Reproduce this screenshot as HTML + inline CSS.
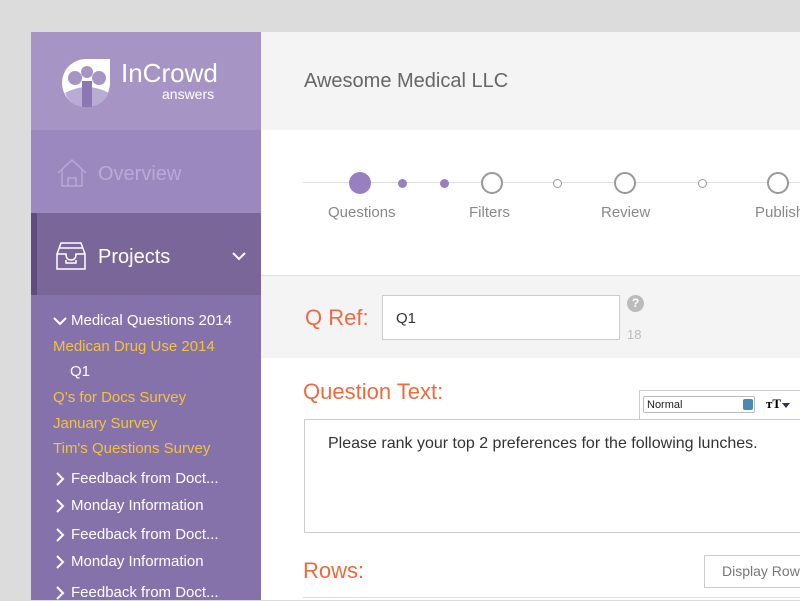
<!DOCTYPE html><html><head><style>
body{margin:0;width:800px;height:600px;background:#dcdcdc;position:relative;overflow:hidden;font-family:"Liberation Sans",sans-serif}
.a{position:absolute}
.sb{left:31px;width:230px}
.t{color:#fff;font-size:15px;white-space:nowrap}
.y{color:#f4c23c;font-size:15px;white-space:nowrap}
.o{color:#f06a40}
.c{position:absolute;border-radius:50%;box-sizing:border-box}
.ch{position:absolute;left:56px}
</style></head><body>
<div class="a sb" style="top:32px;height:98px;background:#a594c4"></div>
<div class="a sb" style="top:130px;height:83px;background:#9a88bf"></div>
<div class="a sb" style="top:213px;height:82px;background:#7a6699"></div>
<div class="a" style="left:31px;top:213px;width:6px;height:82px;background:#5f4d80"></div>
<div class="a sb" style="top:295px;height:305px;background:#8672aa"></div>
<svg class="a" style="left:62px;top:59px" width="50" height="48" viewBox="0 0 50 48"><path d="M0 24 A24 24 0 0 1 24 0 H48 V24 A24 24 0 0 1 24 48 A24 24 0 0 1 0 24Z" fill="#fff"/><path d="M3 34 Q25 22 47 34 Q40 48 24 48 Q9 48 3 34Z" fill="#b9acd4"/><circle cx="13" cy="19" r="7" fill="#a594c4"/><circle cx="25" cy="13" r="6" fill="#a594c4"/><circle cx="37" cy="19" r="7" fill="#a594c4"/><rect x="20" y="22" width="10" height="26" fill="#8b77b3"/></svg>
<div class="a t" style="left:121px;top:58px;font-size:26px">InCrowd</div>
<div class="a t" style="left:162px;top:86px;font-size:14px">answers</div>
<svg class="a" style="left:56px;top:158px" width="32" height="30" viewBox="0 0 32 30" fill="none" stroke="#b6a9d4" stroke-width="1.5"><path d="M2 15 L16 2 L30 15 M6 12 V28 H26 V12 M12 28 V20 H20 V28"/></svg>
<div class="a t" style="left:98px;top:163px;font-size:20px;color:#b8acd6">Overview</div>
<svg class="a" style="left:56px;top:242px" width="30" height="28" viewBox="0 0 30 28" fill="none" stroke="#fff" stroke-width="1.5"><path d="M5 1 H25 L29 12 V27 H1 V12Z M1 12 H10 Q10 18 15 18 Q20 18 20 12 H29 M4 6 H26 M10 18 V21 H20 V18"/></svg>
<div class="a t" style="left:98px;top:246px;font-size:20px">Projects</div>
<svg class="a" style="left:232px;top:252px" width="14" height="9"><path d="M1 1 L7 7 L13 1" stroke="#fff" stroke-width="2" fill="none"/></svg>
<svg class="a" style="left:53px;top:317px" width="14" height="9"><path d="M1 1 L7 7 L13 1" stroke="#fff" stroke-width="2" fill="none"/></svg>
<div class="a t" style="left:71px;top:312px">Medical Questions 2014</div>
<div class="a y" style="left:53px;top:338px">Medican Drug Use 2014</div>
<div class="a t" style="left:70px;top:363px">Q1</div>
<div class="a y" style="left:53px;top:389px">Q’s for Docs Survey</div>
<div class="a y" style="left:53px;top:415px">January Survey</div>
<div class="a y" style="left:53px;top:440px">Tim's Questions Survey</div>
<svg class="ch" style="top:472px" width="9" height="14"><path d="M1 1 L7 7 L1 13" stroke="#fff" stroke-width="2" fill="none"/></svg>
<svg class="ch" style="top:499px" width="9" height="14"><path d="M1 1 L7 7 L1 13" stroke="#fff" stroke-width="2" fill="none"/></svg>
<svg class="ch" style="top:528px" width="9" height="14"><path d="M1 1 L7 7 L1 13" stroke="#fff" stroke-width="2" fill="none"/></svg>
<svg class="ch" style="top:555px" width="9" height="14"><path d="M1 1 L7 7 L1 13" stroke="#fff" stroke-width="2" fill="none"/></svg>
<svg class="ch" style="top:586px" width="9" height="14"><path d="M1 1 L7 7 L1 13" stroke="#fff" stroke-width="2" fill="none"/></svg>
<div class="a t" style="left:71px;top:470px">Feedback from Doct...</div>
<div class="a t" style="left:71px;top:497px">Monday Information</div>
<div class="a t" style="left:71px;top:526px">Feedback from Doct...</div>
<div class="a t" style="left:71px;top:553px">Monday Information</div>
<div class="a t" style="left:71px;top:584px">Feedback from Doct...</div>
<div class="a" style="left:261px;top:32px;width:539px;height:98px;background:#f4f4f4"></div>
<div class="a" style="left:304px;top:70px;font-size:20px;color:#666">Awesome Medical LLC</div>
<div class="a" style="left:261px;top:130px;width:539px;height:145px;background:#fff"></div>
<div class="a" style="left:303px;top:182px;width:497px;height:1px;background:#e0e0e0"></div>
<div class="c" style="left:349px;top:172px;width:22px;height:22px;background:#9880c0"></div>
<div class="c" style="left:398px;top:179px;width:9px;height:9px;background:#9880c0"></div>
<div class="c" style="left:440px;top:179px;width:9px;height:9px;background:#9880c0"></div>
<div class="c" style="left:481px;top:172px;width:22px;height:22px;border:2px solid #999;background:#fff"></div>
<div class="c" style="left:553px;top:179px;width:9px;height:9px;border:1px solid #999;background:#fff"></div>
<div class="c" style="left:614px;top:172px;width:22px;height:22px;border:2px solid #999;background:#fff"></div>
<div class="c" style="left:698px;top:179px;width:9px;height:9px;border:1px solid #999;background:#fff"></div>
<div class="c" style="left:767px;top:172px;width:22px;height:22px;border:2px solid #999;background:#fff"></div>
<div class="a" style="left:328px;top:204px;font-size:15px;color:#888">Questions</div>
<div class="a" style="left:469px;top:204px;font-size:15px;color:#888">Filters</div>
<div class="a" style="left:601px;top:204px;font-size:15px;color:#888">Review</div>
<div class="a" style="left:755px;top:204px;font-size:15px;color:#888">Publish</div>
<div class="a" style="left:261px;top:275px;width:539px;height:82px;background:#f4f4f4;border-top:1px solid #e2e2e2;border-bottom:1px solid #e2e2e2"></div>
<div class="a o" style="left:305px;top:305px;font-size:22px">Q Ref:</div>
<div class="a" style="left:382px;top:295px;width:236px;height:43px;background:#fff;border:1px solid #ccc"></div>
<div class="a" style="left:396px;top:310px;font-size:15px;color:#333">Q1</div>
<div class="c" style="left:627px;top:295px;width:17px;height:17px;background:#bbb;color:#fff;font-size:12px;font-weight:bold;text-align:center;line-height:17px">?</div>
<div class="a" style="left:627px;top:327px;font-size:13px;color:#bbb">18</div>
<div class="a" style="left:261px;top:358px;width:539px;height:242px;background:#fff"></div>
<div class="a o" style="left:303px;top:379px;font-size:22px">Question Text:</div>
<div class="a" style="left:639px;top:390px;width:161px;height:28px;background:#fff;border:1px solid #ccc;border-right:none"></div>
<div class="a" style="left:643px;top:396px;width:112px;height:17px;border:1px solid #bbb;border-radius:2px;font-size:11px;line-height:17px;padding-left:3px;box-sizing:border-box;color:#222">Normal</div>
<div class="a" style="left:743px;top:399px;width:10px;height:11px;background:#4a8ab0;border-radius:2px"></div>
<div class="a" style="left:766px;top:396px;font-size:13px;font-weight:bold;font-family:'Liberation Serif',serif">ᴛT</div>
<div class="a" style="left:782px;top:403px;border-left:4px solid transparent;border-right:4px solid transparent;border-top:5px solid #335"></div>
<div class="a" style="left:304px;top:419px;width:496px;height:114px;border:1px solid #ccc;border-right:none;box-sizing:border-box"></div>
<div class="a" style="left:328px;top:435px;font-size:16px;color:#333;white-space:nowrap">Please rank your top 2 preferences for the following lunches.</div>
<div class="a o" style="left:303px;top:558px;font-size:22px">Rows:</div>
<div class="a" style="left:704px;top:555px;width:96px;height:33px;border:1px solid #ccc;border-right:none;box-sizing:border-box;font-size:14px;color:#777;line-height:31px;padding-left:17px;white-space:nowrap;overflow:hidden">Display Rows</div>
<div class="a" style="left:303px;top:597px;width:497px;height:1px;background:#ddd"></div>
</body></html>
